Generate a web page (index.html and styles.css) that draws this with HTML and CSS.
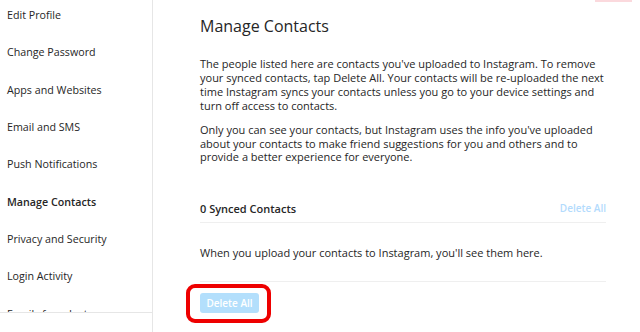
FILE: index.html
```html
<!DOCTYPE html>
<html lang="en">
<head>
<meta charset="utf-8">
<title>Manage Contacts</title>
<link rel="stylesheet" href="styles.css">
</head>
<body>
<div class="page">
  <aside class="sidebar">
    <nav class="menu">
      <a class="menu-item">Edit Profile</a>
      <a class="menu-item">Change Password</a>
      <a class="menu-item">Apps and Websites</a>
      <a class="menu-item">Email and SMS</a>
      <a class="menu-item">Push Notifications</a>
      <a class="menu-item active">Manage Contacts</a>
      <a class="menu-item">Privacy and Security</a>
      <a class="menu-item">Login Activity</a>
      <a class="menu-item">Emails from Instagram</a>
    </nav>
  </aside>
  <main class="content">
    <h1 class="title">Manage Contacts</h1>
    <p class="text">The people listed here are contacts you've uploaded to Instagram. To remove your synced contacts, tap Delete All. Your contacts will be re-uploaded the next time Instagram syncs your contacts unless you go to your device settings and turn off access to contacts.</p>
    <p class="text second">Only you can see your contacts, but Instagram uses the info you've uploaded about your contacts to make friend suggestions for you and others and to provide a better experience for everyone.</p>
    <div class="synced-head">
      <span class="synced-count">0 Synced Contacts</span>
      <span class="link-disabled">Delete All</span>
    </div>
    <div class="empty">When you upload your contacts to Instagram, you'll see them here.</div>
    <div class="actions">
      <span class="highlight"><button class="btn" disabled>Delete All</button></span>
    </div>
  </main>
  <div class="corner-mark"></div>
</div>
</body>
</html>
```
FILE: styles.css
```css
html, body {
  margin: 0;
  padding: 0;
  background: #fff;
}
body {
  font-family: "Open Sans", "Noto Sans", sans-serif;
  color: #262626;
  width: 640px;
  height: 332px;
  overflow: hidden;
}
.page {
  display: flex;
  height: 332px;
  position: relative;
}
.sidebar {
  width: 152px;
  flex: none;
  border-right: 1px solid #e6e6e6;
}
.menu {
  height: 312px;
  overflow: hidden;
  border-bottom: 1px solid #e6e6e6;
  display: flex;
  flex-direction: column;
}
.menu-item {
  flex: none;
  height: 37.3px;
  display: flex;
  align-items: center;
  padding-left: 7px;
  font-size: 10.7px;
  color: #262626;
}
.menu-item:first-child {
  margin-top: -3.5px;
}
.menu-item.active {
  font-weight: 600;
}
.content {
  width: 406px;
  padding-left: 47px;
  padding-top: 15px;
}
.title {
  margin: 0;
  font-size: 16px;
  font-weight: 400;
  line-height: 22px;
}
.text {
  margin: 20px -3px 0 0;
  font-size: 11px;
  line-height: 14px;
}
.text.second {
  margin-top: 10px;
  line-height: 13.7px;
}
.synced-head {
  margin-top: 30px;
  display: flex;
  justify-content: space-between;
  align-items: center;
  height: 28px;
  border-bottom: 1px solid #efefef;
  font-size: 11px;
}
.synced-count {
  font-weight: 600;
}
.link-disabled {
  color: #b3dbfd;
  font-weight: 600;
  font-size: 10px;
}
.empty {
  height: 58px;
  display: flex;
  align-items: center;
  font-size: 11px;
  border-bottom: 1px solid #efefef;
}
.actions {
  padding-top: 11px;
  line-height: 0;
}
.highlight {
  display: inline-block;
  position: relative;
}
.highlight::before {
  content: "";
  position: absolute;
  left: -14px;
  right: -12px;
  top: -9px;
  bottom: -10px;
  border: 4px solid #ee0000;
  border-radius: 9px;
}
.btn {
  display: block;
  width: 59px;
  height: 20px;
  border: 0;
  border-radius: 3px;
  background: #b3dffc;
  color: #fff;
  font-family: inherit;
  font-size: 10px;
  font-weight: 600;
  padding: 0;
  line-height: 20px;
}
.corner-mark {
  position: absolute;
  top: 0;
  left: 595px;
  width: 37px;
  height: 2px;
  background: #fbd9dd;
}
```
